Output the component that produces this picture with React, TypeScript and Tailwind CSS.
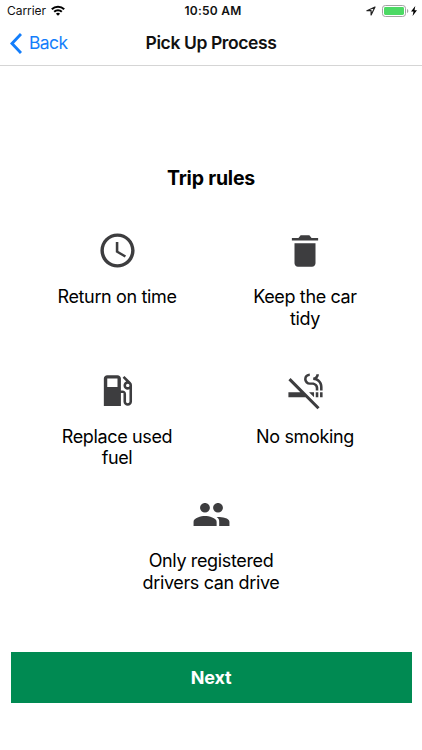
import React from 'react';
import { MdAccessTime, MdLocalGasStation, MdSmokeFree } from 'react-icons/md';
import { IoMdPeople, IoMdTrash } from 'react-icons/io';

interface RuleProps {
  icon: React.ReactNode;
  lines: string[];
}

const StatusBar: React.FC = () => (
  <div className="h-[22px] grid grid-cols-3 items-center pl-[7px] pr-[5px] text-[12px] leading-none text-[#111]">
    <div className="flex items-center gap-[5px]">
      <span className="tracking-[-0.05px]">Carrier</span>
      <svg viewBox="0 0 14 11" className="w-[14px] h-[11px] -mt-px" fill="none" stroke="#000" strokeWidth="2">
        <path d="M0.8 4.3a8.8 8.8 0 0 1 12.4 0" />
        <path d="M3.2 6.8a5.4 5.4 0 0 1 7.6 0" />
        <path d="M7 10.8L4.9 8.7a3 3 0 0 1 4.2 0z" fill="#000" stroke="none" />
      </svg>
    </div>
    <span className="pl-[2px] text-center font-semibold tracking-[0.25px]">10:50 AM</span>
    <div className="flex items-center justify-end">
      <svg viewBox="0 0 10 10" className="w-[10px] h-[10px] mr-[6px]" fill="none" stroke="#222" strokeWidth="1.2" strokeLinejoin="round">
        <path d="M9 1L0.9 4.7H5.1V9z" />
      </svg>
      <svg viewBox="0 0 27 12" className="w-[27px] h-[12px] mr-[2px]">
        <rect x="0.5" y="0.5" width="23" height="11" rx="2.8" fill="none" stroke="#a3a3a3" />
        <rect x="2" y="2" width="20" height="8" rx="1.4" fill="#4cd964" />
        <path d="M25 4v4c.8-.3 1.3-1.1 1.3-2s-.5-1.7-1.3-2z" fill="#a3a3a3" />
      </svg>
      <svg viewBox="0 0 6 10" className="w-[6px] h-[10px]">
        <path d="M4.3 0L0 5.6h2.5L1.6 10 6 4.3H3.5z" fill="#000" />
      </svg>
    </div>
  </div>
);

const NavBar: React.FC = () => (
  <div className="h-[44px] grid grid-cols-[1fr_auto_1fr] items-center border-b border-[#d5d5d5] px-[10px]">
    <button className="flex items-center gap-[7px] text-[#147efb] text-[17.5px]">
      <svg viewBox="0 0 12 21" className="w-[12px] h-[21px] -mt-px" fill="none" stroke="currentColor" strokeWidth="2.9">
        <path d="M11 1L2 10.5L11 20" />
      </svg>
      <span className="tracking-[-0.6px]">Back</span>
    </button>
    <h1 className="text-[17.5px] font-semibold tracking-[-0.4px] text-[#111]">Pick Up Process</h1>
    <span />
  </div>
);

const Rule: React.FC<RuleProps> = ({ icon, lines }) => (
  <div className="flex flex-col items-center">
    <div className="h-[41px] flex items-center justify-center text-[#3d3d3f]">{icon}</div>
    <p className="mt-[15px] text-center text-[18px] leading-[21.5px] tracking-[-0.36px]">
      {lines.map((line) => (
        <span key={line} className="block whitespace-nowrap">{line}</span>
      ))}
    </p>
  </div>
);

export default function App() {
  return (
    <div className="w-full h-[750px] flex flex-col bg-white text-black font-['Inter',sans-serif]">
      <StatusBar />
      <NavBar />

      <main className="flex-1 pl-[23px] pr-[23px]">
        <h2 className="mt-[100px] text-center text-[19.5px] leading-[24px] font-bold tracking-[-0.2px]">
          Trip rules
        </h2>
        <div className="mt-[40px] grid grid-cols-2 auto-rows-[139.5px]">
          <Rule icon={<MdAccessTime size={41} />} lines={['Return on time']} />
          <Rule icon={<IoMdTrash size={42} />} lines={['Keep the car', 'tidy']} />
          <Rule icon={<MdLocalGasStation size={41} />} lines={['Replace used', 'fuel']} />
          <Rule icon={<MdSmokeFree size={41} />} lines={['No smoking']} />
        </div>
        <div className="-mt-[15px]">
          <Rule icon={<IoMdPeople size={41} />} lines={['Only registered', 'drivers can drive']} />
        </div>
      </main>

      <button className="mx-[10.5px] mb-[47px] h-[51px] shrink-0 bg-[#008a52] text-white text-[18px] font-bold tracking-[-0.2px]">
        Next
      </button>
    </div>
  );
}
